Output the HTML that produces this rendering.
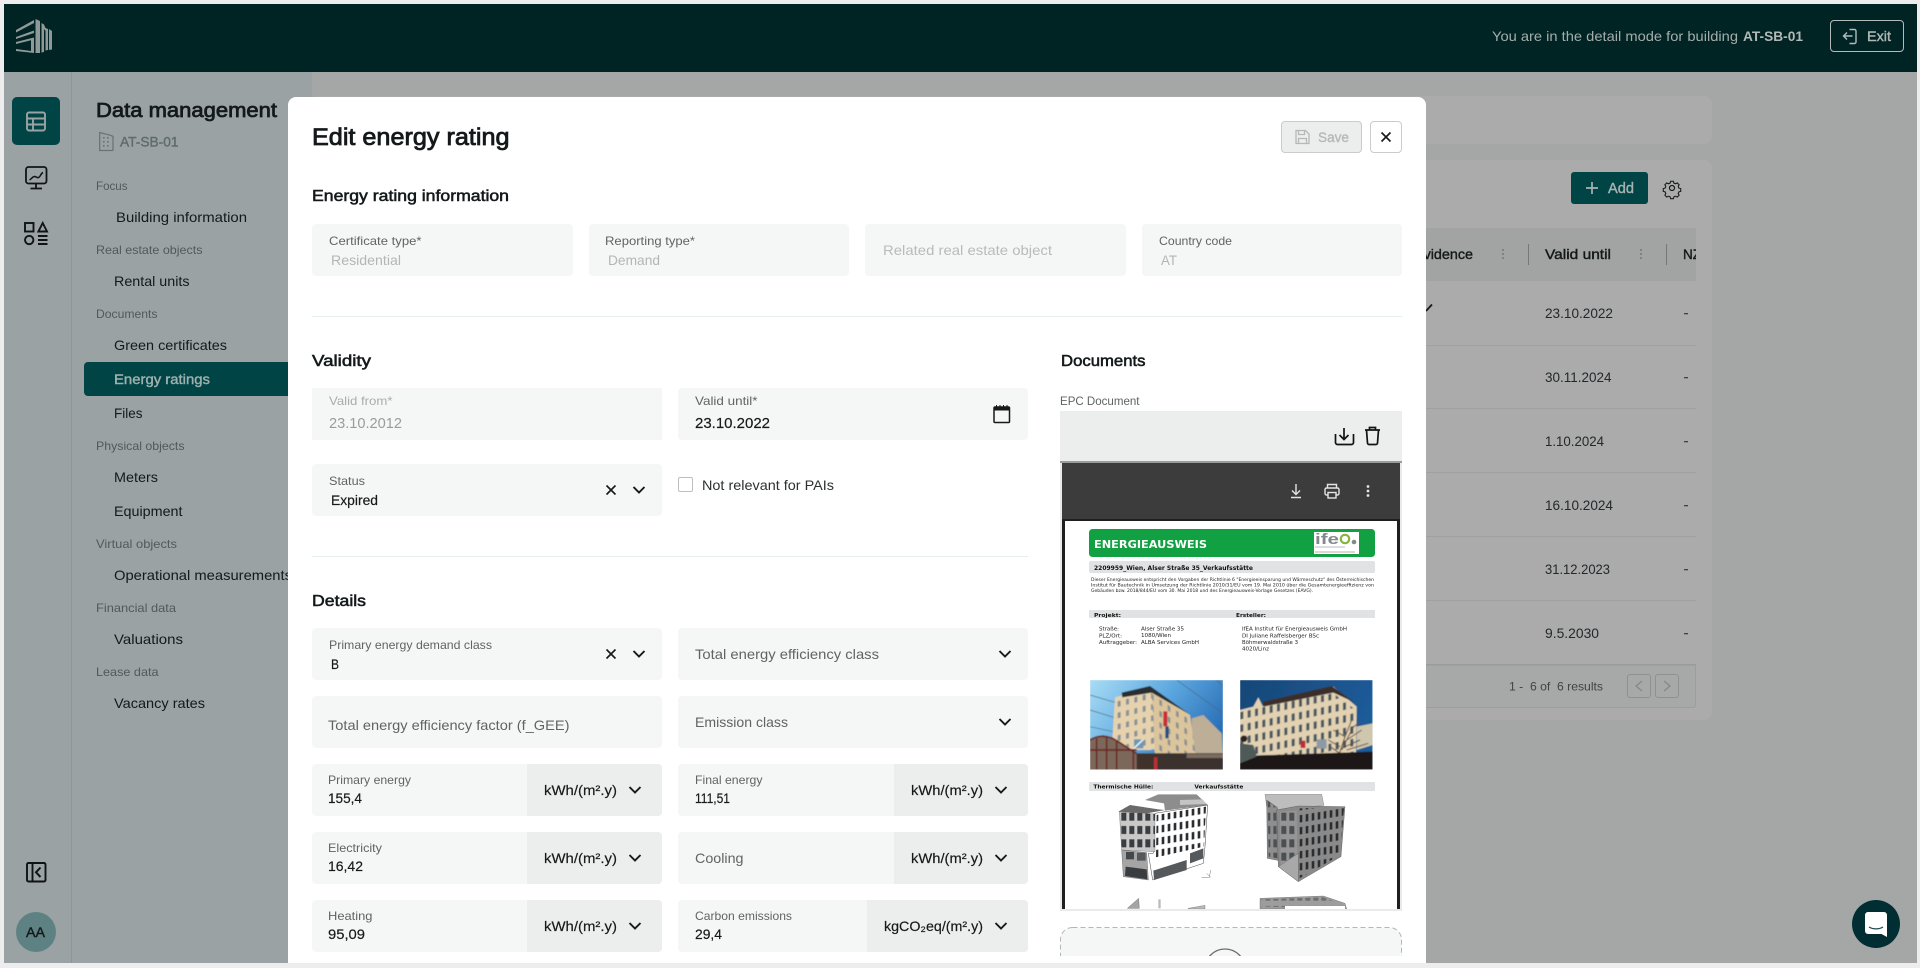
<!DOCTYPE html>
<html lang="en"><head><meta charset="utf-8"><title>Edit energy rating</title>
<style>
html,body{margin:0;padding:0;width:1920px;height:968px;overflow:hidden;background:#ededed}
svg{display:block}
text{font-family:"Liberation Sans",sans-serif;white-space:pre}
.s12{font-size:12px}.s13{font-size:13px}.s14{font-size:14px}.s15{font-size:15px}.s16{font-size:16px}
.m{stroke:currentColor;stroke-width:.4px}
.s16.m{stroke-width:.55px}
.lb{fill:#5f6463;color:#5f6463}
.dis{fill:#b3b6b5}
.dk{fill:#16191a;color:#16191a;stroke:currentColor;stroke-width:.18px}
.g{fill:#52595a}
.n{fill:#14191a}
.v{fill:#23282a}
.p{font-family:"DejaVu Sans",sans-serif;fill:#222}
</style></head><body>
<svg width="1920" height="968" viewBox="0 0 1920 968" xmlns="http://www.w3.org/2000/svg">
<defs>
<path id="chev" d="M-5.5-3 0 2.500 5.500-3" fill="none" stroke="#16191a" stroke-width="1.900"/>
<path id="xx" d="M-4.500-4.500 4.500 4.500M4.500-4.500-4.500 4.500" fill="none" stroke="#16191a" stroke-width="1.600"/>
<filter id="soft" x="0" y="0" width="100%" height="100%"><feGaussianBlur stdDeviation="1.600"/></filter>
<clipPath id="tblclip"><rect x="1300" y="228" width="396" height="500"/></clipPath>
<clipPath id="modalclip"><rect x="288" y="97" width="1138" height="859"/></clipPath>
<clipPath id="ph1"><rect x="150" y="90" width="399" height="269"/></clipPath>
<clipPath id="ph2"><rect x="600" y="90" width="398" height="269"/></clipPath>
<clipPath id="pg"><rect x="75" y="-10" width="995" height="787"/></clipPath>
<linearGradient id="sky1" x1="0" y1="0" x2="1" y2=".5"><stop offset="0" stop-color="#a9dcf5"/><stop offset=".55" stop-color="#5aa5de"/><stop offset="1" stop-color="#2a6fb6"/></linearGradient>
<linearGradient id="sky2" x1="0" y1="0" x2="1" y2=".3"><stop offset="0" stop-color="#174777"/><stop offset="1" stop-color="#1f5b99"/></linearGradient>
<pattern id="w1" width="25" height="34" patternUnits="userSpaceOnUse" patternTransform="skewY(-14)"><rect x="8" y="8" width="9" height="17" fill="#8a9095"/></pattern>
<pattern id="w2" width="25" height="34" patternUnits="userSpaceOnUse" patternTransform="skewY(34)"><rect x="8" y="8" width="8" height="17" fill="#8d8f92"/></pattern>
<pattern id="w3" width="22" height="38" patternUnits="userSpaceOnUse" patternTransform="skewY(-12)"><rect x="7" y="10" width="9" height="22" fill="#4a5560"/></pattern>
<pattern id="w4" width="19" height="38" patternUnits="userSpaceOnUse" patternTransform="skewY(-16)"><rect x="4" y="8" width="10" height="26" fill="#2c2c2e"/></pattern>
<pattern id="w5" width="24" height="40" patternUnits="userSpaceOnUse"><rect x="4" y="8" width="15" height="24" fill="#3a3e41"/></pattern>
<pattern id="w6" width="18" height="36" patternUnits="userSpaceOnUse" patternTransform="skewY(-9)"><rect x="5" y="7" width="8" height="22" fill="#2b2d2f"/></pattern>
</defs>

<!-- page frame -->
<rect width="1920" height="968" fill="#ededed"/>
<!-- main background -->
<rect x="4" y="4" width="1913" height="959" fill="#a5a7a6"/>
<!-- cards behind modal -->
<rect x="312" y="96" width="1400" height="48" rx="8" fill="#ababab"/>
<rect x="312" y="160" width="1400" height="560" rx="8" fill="#ababab"/>
<rect x="1300" y="228" width="396" height="53" fill="#a2a4a3"/>
<g fill="#9fa1a0"><rect x="1300" y="345" width="396" height="1"/><rect x="1300" y="408" width="396" height="1"/><rect x="1300" y="472" width="396" height="1"/><rect x="1300" y="536" width="396" height="1"/><rect x="1300" y="600" width="396" height="1"/></g>
<rect x="1300.500" y="664.500" width="395" height="43" rx="2" fill="#a7a9a8" stroke="#9c9e9d"/>
<rect x="1300" y="664" width="396" height="1.500" fill="#9a9c9b"/>
<!-- Add -->
<rect x="1571" y="172" width="77" height="32" rx="3" fill="#004446"/>
<path d="M1592 182v12M1586 188h12" stroke="#a8b3b1" stroke-width="1.700"/>
<text x="1608" y="193" class="s15 m" fill="#a8b3b1" color="#a8b3b1" textLength="26" lengthAdjust="spacingAndGlyphs">Add</text>
<g fill="none" stroke="#16191a" stroke-width="1.200"><circle cx="1672" cy="188" r="2.500"/><path d="M1670.500 180.500h3l.6 2 1.800.8 1.900-1 2.100 2.100-1 1.900.8 1.800 2 .6v3l-2 .6-.8 1.800 1 1.900-2.100 2.100-1.900-1-1.800.8-.6 2h-3l-.6-2-1.800-.8-1.900 1-2.100-2.100 1-1.900-.8-1.800-2-.6v-3l2-.6.8-1.800-1-1.900 2.100-2.100 1.900 1 1.800-.8z" transform="translate(167.200 18.800) scale(.9)"/></g>
<!-- table -->
<g clip-path="url(#tblclip)">
<text x="1414" y="259" class="s14 m n" color="#14191a" textLength="59" lengthAdjust="spacingAndGlyphs">Evidence</text>
<text x="1545" y="259" class="s14 m n" color="#14191a" textLength="66" lengthAdjust="spacingAndGlyphs">Valid until</text>
<text x="1683" y="259" class="s14 m n" color="#14191a" textLength="36" lengthAdjust="spacingAndGlyphs">NZEB</text>
</g>
<g fill="#7d7f7e"><circle cx="1503" cy="250" r="1.100"/><circle cx="1503" cy="254" r="1.100"/><circle cx="1503" cy="258" r="1.100"/><circle cx="1641" cy="250" r="1.100"/><circle cx="1641" cy="254" r="1.100"/><circle cx="1641" cy="258" r="1.100"/></g>
<rect x="1528" y="244" width="1" height="21" fill="#777"/><rect x="1666" y="244" width="1" height="21" fill="#777"/>
<path d="M1426 311 1432 304.500" stroke="#14191a" stroke-width="1.800"/>
<g class="s14 v">
<text x="1545" y="318" class="s14 v" textLength="68" lengthAdjust="spacingAndGlyphs">23.10.2022</text>
<text x="1545" y="382" class="s14 v" textLength="66.500" lengthAdjust="spacingAndGlyphs">30.11.2024</text>
<text x="1545" y="446" class="s14 v" textLength="59" lengthAdjust="spacingAndGlyphs">1.10.2024</text>
<text x="1545" y="510" class="s14 v" textLength="68" lengthAdjust="spacingAndGlyphs">16.10.2024</text>
<text x="1545" y="574" class="s14 v" textLength="65" lengthAdjust="spacingAndGlyphs">31.12.2023</text>
<text x="1545" y="638" class="s14 v" textLength="54" lengthAdjust="spacingAndGlyphs">9.5.2030</text>
</g>
<g fill="#3c4040"><rect x="1684" y="313" width="4" height="1.300"/><rect x="1684" y="377" width="4" height="1.300"/><rect x="1684" y="441" width="4" height="1.300"/><rect x="1684" y="505" width="4" height="1.300"/><rect x="1684" y="569" width="4" height="1.300"/><rect x="1684" y="633" width="4" height="1.300"/></g>
<text x="1509" y="690.500" class="s12" fill="#3f4444" textLength="94" lengthAdjust="spacingAndGlyphs">1 -  6 of  6 results</text>
<rect x="1627.500" y="674.500" width="23" height="23" rx="2.500" fill="none" stroke="#8f9190"/>
<rect x="1655.500" y="674.500" width="23" height="23" rx="2.500" fill="none" stroke="#8f9190"/>
<path d="M1642 681 1636 686 1642 691" fill="none" stroke="#858786" stroke-width="1.200"/>
<path d="M1664 681 1670 686 1664 691" fill="none" stroke="#858786" stroke-width="1.200"/>

<!-- sidebar -->
<rect x="4" y="72" width="308" height="891" fill="#9aa2a3"/>
<rect x="71" y="72" width="1" height="891" fill="#8b9899"/>
<rect x="12" y="97" width="48" height="48" rx="5" fill="#004446"/>
<g fill="none" stroke="#9aa2a3" stroke-width="1.900"><rect x="27" y="112.500" width="18" height="18" rx="2"/><path d="M27 118.500h18M27 124.500h18M33 118.500v12"/></g>
<g fill="none" stroke="#101415" stroke-width="1.800"><rect x="26" y="167" width="20.500" height="16.500" rx="2.500"/><path d="M36 183.500v4.500M30.500 188.500h11.500"/><path d="M29.500 180c2-1 3-3.500 5-3.500s2 1.500 4 1 2-4 4.500-5" stroke-width="1.500"/></g>
<g fill="none" stroke="#101415" stroke-width="1.900"><rect x="25" y="223" width="8.500" height="8.500"/><path d="M42.700 223 47 231.500H38.400z"/><circle cx="29.200" cy="240" r="4.200"/><path d="M38 236h9.500M38 240h9.500M38 244h9.500"/></g>
<g fill="none" stroke="#0f1314" stroke-width="1.900"><rect x="27" y="863" width="18.500" height="18.500" rx="1.500"/><path d="M32.500 863v18.500"/><path d="M40.500 867.500 36 872.300 40.500 877" stroke-width="2"/></g>
<circle cx="36" cy="932" r="20" fill="#5e8283"/>
<text x="26" y="937" class="s14 m n" color="#14191a" textLength="19" lengthAdjust="spacingAndGlyphs">AA</text>

<text x="96" y="117" font-size="20" class="m n" color="#14191a" style="stroke-width:.75px" textLength="181" lengthAdjust="spacingAndGlyphs">Data management</text>
<g fill="none" stroke="#687273" stroke-width="1.200"><path d="M99.700 150.500V132.500l9 2.300h.3l4 1.500v14.200"/><path d="M99 150.500h14"/></g>
<g fill="#687273"><rect x="103" y="137" width="1.600" height="1.600"/><rect x="107" y="137" width="1.600" height="1.600"/><rect x="103" y="141" width="1.600" height="1.600"/><rect x="107" y="141" width="1.600" height="1.600"/><rect x="103" y="145" width="1.600" height="1.600"/><rect x="107" y="145" width="1.600" height="1.600"/></g>
<text x="120" y="146.500" class="s14 m" fill="#606b6c" color="#606b6c" textLength="58.500" lengthAdjust="spacingAndGlyphs">AT-SB-01</text>

<text x="96" y="190" class="s12 g" textLength="31.500" lengthAdjust="spacingAndGlyphs">Focus</text>
<text x="116" y="222" class="s14 n" textLength="131" lengthAdjust="spacingAndGlyphs">Building information</text>
<text x="96" y="254" class="s12 g" textLength="106.500" lengthAdjust="spacingAndGlyphs">Real estate objects</text>
<text x="114" y="286" class="s14 n" textLength="75.500" lengthAdjust="spacingAndGlyphs">Rental units</text>
<text x="96" y="318" class="s12 g" textLength="61.500" lengthAdjust="spacingAndGlyphs">Documents</text>
<text x="114" y="350" class="s14 n" textLength="113" lengthAdjust="spacingAndGlyphs">Green certificates</text>
<rect x="84" y="362" width="230" height="34" rx="4" fill="#004446"/>
<text x="114" y="384" class="s14 m" fill="#9fb1af" color="#9fb1af" textLength="96" lengthAdjust="spacingAndGlyphs">Energy ratings</text>
<text x="114" y="418" class="s14 n" textLength="28.500" lengthAdjust="spacingAndGlyphs">Files</text>
<text x="96" y="450" class="s12 g" textLength="88.500" lengthAdjust="spacingAndGlyphs">Physical objects</text>
<text x="114" y="482" class="s14 n" textLength="44" lengthAdjust="spacingAndGlyphs">Meters</text>
<text x="114" y="516" class="s14 n" textLength="68.500" lengthAdjust="spacingAndGlyphs">Equipment</text>
<text x="96" y="548" class="s12 g" textLength="81" lengthAdjust="spacingAndGlyphs">Virtual objects</text>
<text x="114" y="580" class="s14 n" textLength="178" lengthAdjust="spacingAndGlyphs">Operational measurements</text>
<text x="96" y="612" class="s12 g" textLength="80" lengthAdjust="spacingAndGlyphs">Financial data</text>
<text x="114" y="644" class="s14 n" textLength="69" lengthAdjust="spacingAndGlyphs">Valuations</text>
<text x="96" y="676" class="s12 g" textLength="62.500" lengthAdjust="spacingAndGlyphs">Lease data</text>
<text x="114" y="708" class="s14 n" textLength="91" lengthAdjust="spacingAndGlyphs">Vacancy rates</text>

<!-- header -->
<rect x="4" y="4" width="1913" height="68" fill="#002324"/>
<g fill="#8f9998">
<polygon points="16,30 34,20 34,23 16,32.500"/>
<polygon points="16,37 34,30.500 34,33 16,39"/>
<polygon points="16,42 34,37.500 34,39.500 16,44"/>
<polygon points="16,49 31,51 31,38.500 34,38 34,53 16,51"/>
<polygon points="35.500,19 40,21 40,53 35.500,53"/>
<polygon points="41.500,23 44,24.500 45.500,28 48,29 48,50 45.500,50.500 45.500,31 44,29 44,52 41.500,52.500"/>
<polygon points="49,29 52,31 52,49.500 49,50"/>
</g>
<text x="1492" y="41" class="s14" fill="#a5adab" textLength="246" lengthAdjust="spacingAndGlyphs">You are in the detail mode for building</text>
<text x="1743" y="41" class="s14" font-weight="700" fill="#b2b9b7" textLength="60" lengthAdjust="spacingAndGlyphs">AT-SB-01</text>
<rect x="1830.500" y="20.500" width="73" height="31" rx="3.500" fill="none" stroke="#b4bcbb"/>
<g fill="none" stroke="#b4bcbb" stroke-width="1.400"><path d="M1849.500 29.500h5a1.500 1.500 0 0 1 1.500 1.500v11a1.500 1.500 0 0 1-1.500 1.500h-5"/><path d="M1852.500 36h-9M1847 32.500 1843.500 36 1847 39.500"/></g>
<text x="1867" y="41" class="s14 m" fill="#b0b8b7" color="#b0b8b7" textLength="24" lengthAdjust="spacingAndGlyphs">Exit</text>

<!-- chat -->
<circle cx="1876" cy="924" r="24" fill="#002e33"/>
<path d="M1868 912h16a3 3 0 0 1 3 3v22l-5.500-3H1868a3 3 0 0 1-3-3v-16a3 3 0 0 1 3-3z" fill="#fff"/>
<path d="M1869 927c4 2.500 10 2.500 14 0" fill="none" stroke="#1d4a4f" stroke-width="1.200"/>

<!-- modal -->
<path d="M296 97H1418a8 8 0 0 1 8 8V963H288V105a8 8 0 0 1 8-8z" fill="#fff"/>
<g clip-path="url(#modalclip)">
<text x="312" y="145" font-size="24" class="m n" color="#14191a" style="stroke-width:.8px" textLength="197.500" lengthAdjust="spacingAndGlyphs">Edit energy rating</text>
<rect x="1281.500" y="121.500" width="80" height="31" rx="3.500" fill="#eceeed" stroke="#c9cccb"/>
<g fill="none" stroke="#b5b8b7" stroke-width="1.300"><path d="M1296 130.500h9.500l3.500 3.500v9.500h-13z"/><path d="M1298.500 130.500v4h6v-4M1298.500 143.500v-5h8v5"/></g>
<text x="1318" y="142" class="s14 m" fill="#b7b9b8" color="#b7b9b8" textLength="31" lengthAdjust="spacingAndGlyphs">Save</text>
<rect x="1370.500" y="121.500" width="31" height="31" rx="3.500" fill="#fff" stroke="#c9cccb"/>
<use href="#xx" x="1386" y="137"/>

<text x="312" y="201" class="s16 m n" color="#14191a" textLength="197" lengthAdjust="spacingAndGlyphs">Energy rating information</text>
<g fill="#f5f7f6">
<rect x="312" y="224" width="261" height="52" rx="4"/><rect x="589" y="224" width="260" height="52" rx="4"/><rect x="865" y="224" width="261" height="52" rx="4"/><rect x="1142" y="224" width="260" height="52" rx="4"/>
<rect x="312" y="388" width="350" height="52"/><rect x="678" y="388" width="350" height="52" rx="4"/>
<rect x="312" y="464" width="350" height="52" rx="4"/>
<rect x="312" y="628" width="350" height="52" rx="4"/><rect x="678" y="628" width="350" height="52" rx="4"/>
<rect x="312" y="696" width="350" height="52" rx="4"/><rect x="678" y="696" width="350" height="52" rx="4"/>
<rect x="312" y="764" width="350" height="52" rx="4"/><rect x="678" y="764" width="350" height="52" rx="4"/>
<rect x="312" y="832" width="350" height="52" rx="4"/><rect x="678" y="832" width="350" height="52" rx="4"/>
<rect x="312" y="900" width="350" height="52" rx="4"/><rect x="678" y="900" width="350" height="52" rx="4"/>
</g>
<g fill="#eceeed">
<path d="M527 764h131a4 4 0 0 1 4 4v44a4 4 0 0 1-4 4H527z"/><path d="M894 764h130a4 4 0 0 1 4 4v44a4 4 0 0 1-4 4H894z"/>
<path d="M527 832h131a4 4 0 0 1 4 4v44a4 4 0 0 1-4 4H527z"/><path d="M894 832h130a4 4 0 0 1 4 4v44a4 4 0 0 1-4 4H894z"/>
<path d="M527 900h131a4 4 0 0 1 4 4v44a4 4 0 0 1-4 4H527z"/><path d="M867 900h157a4 4 0 0 1 4 4v44a4 4 0 0 1-4 4H867z"/>
</g>
<text x="329" y="245" class="s12 lb" textLength="92.500" lengthAdjust="spacingAndGlyphs">Certificate type*</text>
<text x="331" y="265" class="s14 dis" textLength="70" lengthAdjust="spacingAndGlyphs">Residential</text>
<text x="605" y="245" class="s12 lb" textLength="90" lengthAdjust="spacingAndGlyphs">Reporting type*</text>
<text x="608" y="265" class="s14 dis" textLength="52" lengthAdjust="spacingAndGlyphs">Demand</text>
<text x="883" y="255" class="s14" fill="#b8bbba" textLength="169" lengthAdjust="spacingAndGlyphs">Related real estate object</text>
<text x="1159" y="245" class="s12 lb" textLength="73" lengthAdjust="spacingAndGlyphs">Country code</text>
<text x="1161" y="265" class="s14 dis" textLength="16" lengthAdjust="spacingAndGlyphs">AT</text>
<rect x="312" y="316" width="1090" height="1" fill="#e5efee"/>

<text x="312" y="366" class="s16 m n" color="#14191a" textLength="59" lengthAdjust="spacingAndGlyphs">Validity</text>
<text x="329" y="405" class="s12" fill="#a9acab" textLength="63.500" lengthAdjust="spacingAndGlyphs">Valid from*</text>
<text x="329" y="428" class="s15" fill="#9a9d9c" textLength="73" lengthAdjust="spacingAndGlyphs">23.10.2012</text>
<text x="695" y="405" class="s12 lb" textLength="62.500" lengthAdjust="spacingAndGlyphs">Valid until*</text>
<text x="695" y="428" class="s15 dk" textLength="75" lengthAdjust="spacingAndGlyphs">23.10.2022</text>
<g fill="none" stroke="#16191a" stroke-width="1.500"><rect x="994" y="407" width="15.500" height="15.500" rx="1"/></g>
<rect x="994" y="407" width="15.500" height="3.500" fill="#16191a"/>
<path d="M996.500 405v3M1000 405v3M1003.500 405v3M1007 405v3" stroke="#16191a" stroke-width="1"/>

<text x="329" y="485" class="s12 lb" textLength="36" lengthAdjust="spacingAndGlyphs">Status</text>
<text x="331" y="505" class="s14 dk" textLength="47" lengthAdjust="spacingAndGlyphs">Expired</text>
<use href="#xx" x="611" y="490"/><use href="#chev" x="639" y="490"/>
<rect x="678.500" y="477.500" width="14" height="14" rx="1.500" fill="#fff" stroke="#bcbfbe"/>
<text x="702" y="490" class="s14" fill="#2c3031" textLength="132" lengthAdjust="spacingAndGlyphs">Not relevant for PAIs</text>
<rect x="312" y="556" width="716" height="1" fill="#e5efee"/>

<text x="312" y="606" class="s16 m n" color="#14191a" textLength="54" lengthAdjust="spacingAndGlyphs">Details</text>
<text x="329" y="649" class="s12 lb" textLength="163" lengthAdjust="spacingAndGlyphs">Primary energy demand class</text>
<text x="331" y="669" class="s14 dk" textLength="8" lengthAdjust="spacingAndGlyphs">B</text>
<use href="#xx" x="611" y="654"/><use href="#chev" x="639" y="654"/>
<text x="695" y="659" class="s14 lb" textLength="184" lengthAdjust="spacingAndGlyphs">Total energy efficiency class</text>
<use href="#chev" x="1005" y="654"/>
<text x="328" y="730" class="s14 lb" textLength="241.500" lengthAdjust="spacingAndGlyphs">Total energy efficiency factor (f_GEE)</text>
<text x="695" y="727" class="s14 lb" textLength="93" lengthAdjust="spacingAndGlyphs">Emission class</text>
<use href="#chev" x="1005" y="722"/>

<text x="328" y="784" class="s12 lb" textLength="83" lengthAdjust="spacingAndGlyphs">Primary energy</text>
<text x="328" y="803" class="s14 dk" textLength="34" lengthAdjust="spacingAndGlyphs">155,4</text>
<text x="544" y="795" class="s14 dk" textLength="73" lengthAdjust="spacingAndGlyphs">kWh/(m².y)</text>
<use href="#chev" x="635" y="790"/>
<text x="695" y="784" class="s12 lb" textLength="67.500" lengthAdjust="spacingAndGlyphs">Final energy</text>
<text x="695" y="803" class="s14 dk" textLength="35" lengthAdjust="spacingAndGlyphs">111,51</text>
<text x="911" y="795" class="s14 dk" textLength="72" lengthAdjust="spacingAndGlyphs">kWh/(m².y)</text>
<use href="#chev" x="1001" y="790"/>

<text x="328" y="852" class="s12 lb" textLength="54" lengthAdjust="spacingAndGlyphs">Electricity</text>
<text x="328" y="871" class="s14 dk" textLength="35" lengthAdjust="spacingAndGlyphs">16,42</text>
<text x="544" y="863" class="s14 dk" textLength="73" lengthAdjust="spacingAndGlyphs">kWh/(m².y)</text>
<use href="#chev" x="635" y="858"/>
<text x="695" y="863" class="s14 lb" textLength="48.500" lengthAdjust="spacingAndGlyphs">Cooling</text>
<text x="911" y="863" class="s14 dk" textLength="72" lengthAdjust="spacingAndGlyphs">kWh/(m².y)</text>
<use href="#chev" x="1001" y="858"/>

<text x="328" y="920" class="s12 lb" textLength="44.500" lengthAdjust="spacingAndGlyphs">Heating</text>
<text x="328" y="939" class="s14 dk" textLength="37" lengthAdjust="spacingAndGlyphs">95,09</text>
<text x="544" y="931" class="s14 dk" textLength="73" lengthAdjust="spacingAndGlyphs">kWh/(m².y)</text>
<use href="#chev" x="635" y="926"/>
<text x="695" y="920" class="s12 lb" textLength="97" lengthAdjust="spacingAndGlyphs">Carbon emissions</text>
<text x="695" y="939" class="s14 dk" textLength="27" lengthAdjust="spacingAndGlyphs">29,4</text>
<text x="884" y="931" class="s14 dk" textLength="99" lengthAdjust="spacingAndGlyphs">kgCO₂eq/(m².y)</text>
<use href="#chev" x="1001" y="926"/>

<!-- Documents column -->
<text x="1061" y="366" class="s16 m n" color="#14191a" textLength="84.500" lengthAdjust="spacingAndGlyphs">Documents</text>
<text x="1060" y="405" class="s12 lb" textLength="79.500" lengthAdjust="spacingAndGlyphs">EPC Document</text>
<rect x="1060" y="411" width="342" height="50" fill="#eceeed"/>
<g fill="none" stroke="#101415" stroke-width="1.700"><path d="M1335.500 434v8.500a2 2 0 0 0 2 2h14a2 2 0 0 0 2-2V434"/><path d="M1344 428v11.500M1339.500 435l4.500 4.500 4.500-4.500"/>
<path d="M1365 430h15M1369.500 430v-2.500h6v2.500M1366.500 430l1 13a1.500 1.500 0 0 0 1.500 1.500h7a1.500 1.500 0 0 0 1.500-1.500l1-13"/></g>
<!-- PDF viewer -->
<rect x="1060" y="461" width="342" height="450" fill="#e9eaea"/>
<rect x="1060" y="461" width="342" height="2" fill="#9a9c9c"/>
<rect x="1062" y="463" width="338" height="446" fill="#1f1f1f"/>
<rect x="1062" y="463" width="338" height="56" fill="#3c3c3c"/>
<g fill="none" stroke="#e4e4e4" stroke-width="1.400"><path d="M1296 484v10M1292 490.500l4 4 4-4M1291 497.500h10"/>
<path d="M1327.500 488v-3.500h9v3.500"/><rect x="1325" y="488" width="14" height="7" rx="1.500"/><rect x="1328" y="492.500" width="8" height="5.500" fill="#3c3c3c"/></g>
<g fill="#e4e4e4"><circle cx="1368" cy="486.500" r="1.400"/><circle cx="1368" cy="491" r="1.400"/><circle cx="1368" cy="495.500" r="1.400"/></g>
<rect x="1065" y="521" width="332" height="388" fill="#fff"/>
<!-- PDF page content -->
<rect x="1089" y="529" width="286" height="28" rx="3.500" fill="#12a142"/>
<text x="1094" y="548" font-size="11" font-weight="700" fill="#fff" class="p" style="fill:#fff" textLength="113" lengthAdjust="spacingAndGlyphs">ENERGIEAUSWEIS</text>
<rect x="1314" y="532" width="45" height="22" fill="#fff"/>
<text x="1315" y="544" font-size="15" font-weight="700" fill="#808a8c" textLength="24" lengthAdjust="spacingAndGlyphs">ife</text>
<circle cx="1345" cy="539" r="4.200" fill="none" stroke="#84b53c" stroke-width="2.200"/>
<circle cx="1354" cy="542" r="2.300" fill="#808a8c"/>
<rect x="1315" y="546.500" width="30" height="1" fill="#b7bbbc"/><rect x="1315" y="551.500" width="40" height="1" fill="#c4a8a8"/>
<rect x="1089" y="561" width="286" height="12" rx="2" fill="#e1e2e3"/>
<text x="1094" y="570" font-size="6.500" font-weight="700" class="p" textLength="159" lengthAdjust="spacingAndGlyphs" style="fill:#111">2209959_Wien, Alser Straße 35_Verkaufsstätte</text>
<text x="1091" y="581" font-size="4.300" class="p" textLength="283" lengthAdjust="spacingAndGlyphs">Dieser Energieausweis entspricht den Vorgaben der Richtlinie 6 "Energieeinsparung und Wärmeschutz" des Österreichischen</text>
<text x="1091" y="586.500" font-size="4.300" class="p" textLength="283" lengthAdjust="spacingAndGlyphs">Institut für Bautechnik in Umsetzung der Richtlinie 2010/31/EU vom 19. Mai 2010 über die Gesamtenergieeffizienz von</text>
<text x="1091" y="592" font-size="4.300" class="p" textLength="222" lengthAdjust="spacingAndGlyphs">Gebäuden bzw. 2018/844/EU vom 30. Mai 2018 und des Energieausweis-Vorlage Gesetzes (EAVG).</text>
<rect x="1089" y="610" width="286" height="8" fill="#e1e2e3"/>
<text x="1094" y="617" font-size="5.600" font-weight="700" class="p" textLength="27" lengthAdjust="spacingAndGlyphs" style="fill:#111">Projekt:</text>
<text x="1236" y="617" font-size="5.600" font-weight="700" class="p" textLength="30" lengthAdjust="spacingAndGlyphs" style="fill:#111">Ersteller:</text>
<g font-size="5">
<text x="1099" y="630.500" class="p" font-size="5" textLength="20" lengthAdjust="spacingAndGlyphs">Straße:</text>
<text x="1099" y="637.500" class="p" font-size="5" textLength="23" lengthAdjust="spacingAndGlyphs">PLZ/Ort:</text>
<text x="1099" y="644" class="p" font-size="5" textLength="38" lengthAdjust="spacingAndGlyphs">Auftraggeber:</text>
<text x="1141" y="630.500" class="p" font-size="5" textLength="43" lengthAdjust="spacingAndGlyphs">Alser Straße 35</text>
<text x="1141" y="637" class="p" font-size="5" textLength="30" lengthAdjust="spacingAndGlyphs">1080/Wien</text>
<text x="1141" y="644" class="p" font-size="5" textLength="58" lengthAdjust="spacingAndGlyphs">ALBA Services GmbH</text>
<text x="1242" y="630.500" class="p" font-size="5" textLength="105" lengthAdjust="spacingAndGlyphs">IfEA Institut für Energieausweis GmbH</text>
<text x="1242" y="637.500" class="p" font-size="5" textLength="77" lengthAdjust="spacingAndGlyphs">DI Juliane Raffelsberger BSc</text>
<text x="1242" y="644" class="p" font-size="5" textLength="56" lengthAdjust="spacingAndGlyphs">Böhmerwaldstraße 3</text>
<text x="1242" y="650.500" class="p" font-size="5" textLength="27" lengthAdjust="spacingAndGlyphs">4020/Linz</text>
</g>

<g transform="translate(1040 650) scale(.33333)">
<g clip-path="url(#pg)">
<!-- photo 1 -->
<g clip-path="url(#ph1)"><g filter="url(#soft)">
<rect x="150" y="90" width="399" height="269" fill="url(#sky1)"/>
<path d="M150 135 235 160M150 180 230 205M150 230 220 245M410 90 549 190M530 90 549 110" stroke="#4a6a80" stroke-width="2" fill="none"/>
<polygon points="455,205 490,195 545,250 549,330 455,330" fill="#bcae97"/>
<polygon points="225,142 335,112 345,300 215,300" fill="#e6d3ae"/>
<polygon points="335,112 450,195 468,320 345,320" fill="#dbc59c"/>
<polygon points="225,142 335,112 345,300 215,300" fill="url(#w1)"/>
<polygon points="335,112 450,195 468,320 345,320" fill="url(#w2)"/>
<polygon points="245,128 330,108 452,195 335,128 247,142" fill="#2c2d33"/>
<rect x="370" y="184" width="12" height="45" fill="#c72f35"/><rect x="376" y="229" width="10" height="36" fill="#21507f"/>
<rect x="282" y="268" width="28" height="27" fill="#6b98b5"/><path d="M282 295 310 268" stroke="#e5eef2" stroke-width="5"/>
<rect x="150" y="310" width="399" height="49" fill="#3f332c"/>
<path d="M340 310H549V359H340z" fill="#3a322e"/><rect x="342" y="322" width="10" height="36" fill="#c02f33"/><rect x="440" y="312" width="109" height="12" fill="#7a6d60"/>
<polygon points="150,270 190,255 235,272 290,310 290,359 150,359" fill="#7c675a"/>
<path d="M150 270Q190 245 235 275T290 310M150 300H290M170 265V359M230 275V359M280 305V359M200 262V359" stroke="#6a2a26" stroke-width="5" fill="none"/>
</g></g>
<!-- photo 2 -->
<g clip-path="url(#ph2)"><g filter="url(#soft)">
<rect x="600" y="90" width="398" height="269" fill="url(#sky2)"/>
<polygon points="600,180 640,170 655,142 668,168 880,110 950,170 948,320 600,320" fill="#e2d2b2"/>
<polygon points="600,180 880,130 948,180 948,320 600,320" fill="url(#w3)"/>
<polygon points="670,155 875,108 945,158 880,128 670,170" fill="#3a2f2c"/>
<polygon points="950,230 998,220 998,285 950,300" fill="#cfc7ad"/>
<path d="M895 320 915 260 935 210M915 260 880 240M920 270 965 240M920 300 985 280M900 290 865 270M905 300 940 230M915 290 960 270M900 310 870 290M930 240 960 215" stroke="#5f4a3c" stroke-width="3" fill="none"/>
<polygon points="600,318 998,305 998,359 600,359" fill="#1d1614"/>
<rect x="782" y="272" width="14" height="22" fill="#c02c32"/><rect x="830" y="268" width="30" height="28" fill="#8e9aa3"/>
<circle cx="612" cy="266" r="10" fill="#2a2422"/>
<polygon points="600,280 640,285 650,320 600,340" fill="#4f5a58"/>
</g></g>
<rect x="147" y="396" width="858" height="27" rx="4" fill="#e1e2e3"/>
<g filter="url(#soft)" style="filter:none">
<!-- 3D left -->
<polygon points="315,450 355,433 470,433 503,465 375,482 372,460" fill="#8d8d8d"/>
<polygon points="420,450 488,448 498,462 420,465" fill="#c4c4c4"/>
<polygon points="235,485 270,465 355,478 375,480 320,490" fill="#6a6a6a"/>
<polygon points="345,490 503,465 495,590 490,640 338,690 325,610 340,610" fill="#fff" stroke="#444" stroke-width="1.500"/>
<polygon points="350,495 498,470 492,590 348,622" fill="url(#w6)"/>
<polygon points="238,485 345,492 345,605 245,600" fill="#c9c9c9" stroke="#555"/>
<polygon points="238,485 345,492 345,605 245,600" fill="url(#w5)"/>
<polygon points="245,600 320,608 325,690 250,680" fill="#a5a5a5" stroke="#444"/>
<rect x="258" y="606" width="24" height="22" fill="#44484a"/><rect x="291" y="608" width="26" height="24" fill="#55595b"/>
<polygon points="257,650 320,658 322,688 255,678" fill="#3a3d3f"/>
<polygon points="340,662 440,630 440,660 342,690" fill="#55595c"/>
<polygon points="450,610 490,595 490,625 450,640" fill="#55595c"/>
<path d="M485 682H508L512 660M500 670 512 682" fill="none" stroke="#777" stroke-width="1.500"/>
<!-- 3D right -->
<polygon points="675,433 845,433 852,466 715,480 680,470" fill="#bdbdbd" stroke="#666"/>
<polygon points="680,450 712,472 718,632 682,625" fill="#8e8e8e" stroke="#444"/>
<polygon points="683,452 708,472 712,625 686,620" fill="url(#w5)" opacity=".75"/>
<polygon points="710,480 775,468 915,470 903,620 775,695 715,650" fill="#8a8a8a" stroke="#444"/>
<polygon points="778,475 912,472 901,615 778,685" fill="url(#w6)"/>
<polygon points="715,650 775,610 775,695" fill="#a8a8a8" stroke="#555"/>
<polygon points="720,485 770,482 772,610 722,645" fill="#959595"/>
<polygon points="720,485 770,482 772,610 722,645" fill="url(#w5)" opacity=".8"/>
<!-- bottom partial models -->
<polygon points="262,775 296,745 298,775" fill="#a4a4a4" stroke="#555"/>
<rect x="355" y="748" width="7" height="27" fill="#bbb"/>
<polygon points="445,775 495,766 495,777 445,777" fill="#b9b9b9" stroke="#555"/>
<polygon points="660,745 850,738 915,760 920,777 660,777" fill="#9d9d9d" stroke="#555"/>
<polygon points="665,748 850,742 915,765 915,777 665,770" fill="url(#w5)" opacity=".5"/>
<rect x="735" y="768" width="180" height="9" fill="#fff"/>
</g>
</g>
<text x="160" y="416" font-size="17" font-weight="700" class="p" textLength="180" lengthAdjust="spacingAndGlyphs" style="fill:#111">Thermische Hülle:</text>
<text x="463" y="416" font-size="17" font-weight="700" class="p" textLength="147" lengthAdjust="spacingAndGlyphs" style="fill:#111">Verkaufsstätte</text>
</g>
<!-- upload zone -->
<rect x="1060.500" y="927.500" width="341" height="60" rx="12" fill="#f5f7f6" stroke="#b5b7b6" stroke-dasharray="5 3"/>
<circle cx="1225" cy="969" r="20" fill="none" stroke="#6c6f6e" stroke-width="1.300"/>
</g>
</svg>
</body></html>
